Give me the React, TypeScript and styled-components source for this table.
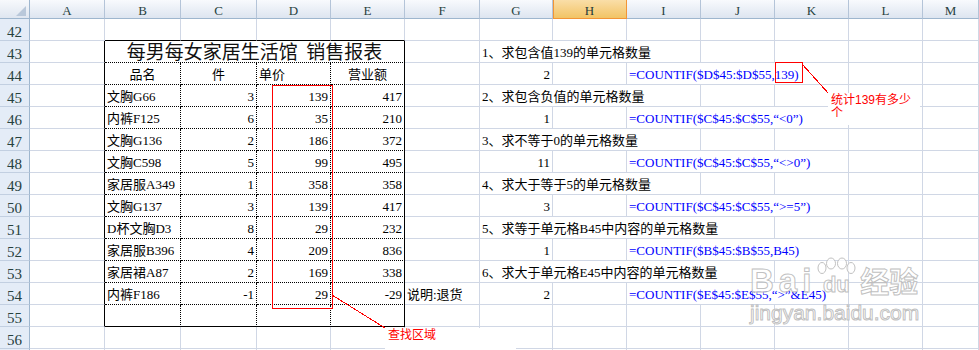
import React from 'react'
import styled, { createGlobalStyle, css } from 'styled-components'

const GlobalStyle = createGlobalStyle`
  html,
  body {
    margin: 0;
    padding: 0;
    background: #fff;
    overflow: hidden;
  }
`

// types
type Line = 'grid' | 'dot' | 'solid'
type Align = 'left' | 'center' | 'right'
type Kind = 'plain' | 'title' | 'formula'

type CellData = {
  text?: string
  span?: number
  align?: Align
  kind?: Kind
  rb?: Line
  bb?: Line
}

const COLUMNS = ['A', 'B', 'C', 'D', 'E', 'F', 'G', 'H', 'I', 'J', 'K', 'L', 'M']
const ACTIVE_COLUMN = 'H'

// helpers to build the rows
const blank = (n: number): CellData[] => Array.from({ length: n }, () => ({}))

// F column + a label overflowing over `span` columns from G
const label = (text: string, span: number): CellData[] => [
  {},
  { text, span },
  ...blank(7 - span)
]

// F, G (result), H, I..K (formula), L, M
const formula = (count: string, text: string): CellData[] => [
  {},
  { text: count, align: 'right' },
  {},
  { text, span: 3, kind: 'formula' },
  {},
  {}
]

const item = (
  name: string,
  qty: string,
  price: string,
  amount: string,
  bb: Line = 'dot'
): CellData[] => [
  { rb: 'solid' },
  { text: name, rb: 'dot', bb },
  { text: qty, align: 'right', rb: 'dot', bb },
  { text: price, align: 'right', rb: 'dot', bb },
  { text: amount, align: 'right', rb: 'solid', bb }
]

const ROWS: { n: number; cells: CellData[] }[] = [
  { n: 42, cells: [{}, ...blank(4).map(() => ({ bb: 'solid' as Line })), ...blank(8)] },
  {
    n: 43,
    cells: [
      { rb: 'solid' },
      {
        text: '每男每女家居生活馆  销售报表',
        span: 4,
        kind: 'title',
        align: 'center',
        rb: 'solid',
        bb: 'dot'
      },
      ...label('1、求包含值139的单元格数量', 3)
    ]
  },
  {
    n: 44,
    cells: [
      { rb: 'solid' },
      { text: '品名', align: 'center', rb: 'dot', bb: 'dot' },
      { text: '件', align: 'center', rb: 'dot', bb: 'dot' },
      { text: '单价', rb: 'dot', bb: 'dot' },
      { text: '营业额', align: 'center', rb: 'solid', bb: 'dot' },
      ...formula('2', '=COUNTIF($D$45:$D$55,139)')
    ]
  },
  { n: 45, cells: [...item('文胸G66', '3', '139', '417'), ...label('2、求包含负值的单元格数量', 3)] },
  { n: 46, cells: [...item('内裤F125', '6', '35', '210'), ...formula('1', '=COUNTIF($C$45:$C$55,“<0”)')] },
  { n: 47, cells: [...item('文胸G136', '2', '186', '372'), ...label('3、求不等于0的单元格数量', 3)] },
  { n: 48, cells: [...item('文胸C598', '5', '99', '495'), ...formula('11', '=COUNTIF($C$45:$C$55,“<>0”)')] },
  { n: 49, cells: [...item('家居服A349', '1', '358', '358'), ...label('4、求大于等于5的单元格数量', 3)] },
  { n: 50, cells: [...item('文胸G137', '3', '139', '417'), ...formula('3', '=COUNTIF($C$45:$C$55,“>=5”)')] },
  { n: 51, cells: [...item('D杯文胸D3', '8', '29', '232'), ...label('5、求等于单元格B45中内容的单元格数量', 4)] },
  { n: 52, cells: [...item('家居服B396', '4', '209', '836'), ...formula('1', '=COUNTIF($B$45:$B$55,B45)')] },
  { n: 53, cells: [...item('家居裙A87', '2', '169', '338'), ...label('6、求大于单元格E45中内容的单元格数量', 4)] },
  {
    n: 54,
    cells: [
      ...item('内裤F186', '-1', '29', '-29'),
      { text: '说明:退货' },
      ...formula('2', '=COUNTIF($E$45:$E$55,“>”&E45)').slice(1)
    ]
  },
  { n: 55, cells: [...item('', '', '', '', 'solid'), ...blank(8)] },
  { n: 56, cells: blank(13) },
  // only a sliver of the next row shows at the bottom edge
  { n: 0, cells: blank(13) }
]

const border = (line: Line = 'grid') => {
  if (line === 'dot') return '1px dotted #000'
  if (line === 'solid') return '1px solid #000'
  return '1px solid #d0d7e5'
}

const justify = (align: Align) =>
  align === 'right' ? 'flex-end' : align === 'center' ? 'center' : 'flex-start'

const App = () => {
  return (
    <Page>
      <GlobalStyle />
      <Sheet>
        <Corner />
        {COLUMNS.map((c) => (
          <ColHead key={c} $active={c === ACTIVE_COLUMN}>
            {c}
          </ColHead>
        ))}
        {ROWS.map(({ n, cells }) => (
          <React.Fragment key={n}>
            <RowHead>{n > 0 ? n : ''}</RowHead>
            {cells.map((cell, i) => (
              <Cell
                key={i}
                $span={cell.span ?? 1}
                $align={cell.align ?? 'left'}
                $kind={cell.kind ?? 'plain'}
                $rb={cell.rb}
                $bb={cell.bb}
              >
                {cell.text}
              </Cell>
            ))}
          </React.Fragment>
        ))}
      </Sheet>

      <Leaders width="979" height="350" viewBox="0 0 979 350">
        <line x1="332" y1="295" x2="385" y2="328" />
        <line x1="802" y1="64" x2="829" y2="94" />
      </Leaders>
      <RedFrame $x={272} $y={85} $w={61} $h={224} />
      <RedFrame $x={775} $y={62} $w={28} $h={21} />

      <Note $x={828} $y={93} $w={92} $h={32}>
        统计139有多少
        <br />个
      </Note>
      <Note $x={385} $y={328} $w={131} $h={22}>
        查找区域
      </Note>

      <Watermark>
        <MarkRow>
          <MarkWord>Bai</MarkWord>
          <Paw>
            <svg width="40" height="17" viewBox="0 0 40 17">
              <ellipse cx="6" cy="11" rx="4" ry="5.5" />
              <ellipse cx="15" cy="6.5" rx="4.5" ry="5.5" />
              <ellipse cx="26" cy="6.5" rx="4.5" ry="5.5" />
              <ellipse cx="35" cy="11" rx="4" ry="5.5" />
            </svg>
            <PawText>du</PawText>
          </Paw>
          <MarkCjk>经验</MarkCjk>
        </MarkRow>
        <MarkUrl>jingyan.baidu.com</MarkUrl>
      </Watermark>
    </Page>
  )
}

export default App

const Page = styled.div`
  position: relative;
  width: 979px;
  height: 350px;
  overflow: hidden;
  background: #fff;
`

const Sheet = styled.div`
  display: grid;
  grid-template-columns: 30px 75px 76px 76px 74px 74px 75px 73px 74px 74px 74px 74px 74px 1fr;
  grid-template-rows: 19px;
  grid-auto-rows: 22px;
`

const Corner = styled.div`
  position: relative;
  background: linear-gradient(#f7f9fc, #dfe6f0);
  border-right: 1px solid #9eb6ce;
  border-bottom: 1px solid #9eb6ce;

  &::after {
    content: '';
    position: absolute;
    right: 3px;
    bottom: 2px;
    border-style: solid;
    border-width: 0 0 10px 10px;
    border-color: transparent transparent #b9c8da transparent;
  }
`

const ColHead = styled.div<{ $active?: boolean }>`
  display: flex;
  justify-content: center;
  align-items: center;
  padding-top: 3px;
  box-sizing: border-box;
  background: linear-gradient(#f8fafd, #dde5f0);
  border-right: 1px solid #b4c4d8;
  border-bottom: 1px solid #9eb6ce;
  font-family: 'Liberation Serif', serif;
  font-size: 13px;
  line-height: 13px;
  color: #27413e;

  ${({ $active }) =>
    $active &&
    css`
      background: linear-gradient(#fadea8, #f2c465);
      border-right-color: #f29536;
      border-bottom-color: #f29536;
      box-shadow: inset 1px 0 #f29536;
      color: #1f3a3a;
    `}
`

const RowHead = styled.div`
  display: flex;
  justify-content: center;
  align-items: flex-end;
  background: #e4ecf7;
  border-right: 1px solid #9eb6ce;
  border-bottom: 1px solid #c2cfe1;
  font-family: 'Liberation Serif', serif;
  font-size: 15px;
  line-height: 15px;
  color: #27413e;
`

const Cell = styled.div<{
  $span: number
  $align: Align
  $kind: Kind
  $rb?: Line
  $bb?: Line
}>`
  grid-column: span ${({ $span }) => $span};
  display: flex;
  align-items: flex-end;
  justify-content: ${({ $align }) => justify($align)};
  min-width: 0;
  padding: 0 2px 1px;
  box-sizing: border-box;
  border-right: ${({ $rb }) => border($rb)};
  border-bottom: ${({ $bb }) => border($bb)};
  white-space: pre;
  font-family: 'Liberation Serif', 'Noto Sans CJK SC', serif;
  font-size: 13px;
  line-height: 17px;
  color: #000;

  ${({ $kind }) =>
    $kind === 'title' &&
    css`
      font-family: 'Noto Sans CJK SC', sans-serif;
      font-size: 19px;
      line-height: 20px;
      color: #111;
    `}

  ${({ $kind }) =>
    $kind === 'formula' &&
    css`
      color: #0000ff;
    `}
`

const Leaders = styled.svg`
  position: absolute;
  top: 0;
  left: 0;
  pointer-events: none;
  shape-rendering: crispEdges;

  line {
    stroke: #ff0000;
    stroke-width: 1;
  }
`

const RedFrame = styled.div<{ $x: number; $y: number; $w: number; $h: number }>`
  position: absolute;
  left: ${({ $x }) => $x}px;
  top: ${({ $y }) => $y}px;
  width: ${({ $w }) => $w}px;
  height: ${({ $h }) => $h}px;
  box-sizing: border-box;
  border: 1px solid #ff0000;
`

const Note = styled.div<{ $x: number; $y: number; $w: number; $h: number }>`
  position: absolute;
  left: ${({ $x }) => $x}px;
  top: ${({ $y }) => $y}px;
  width: ${({ $w }) => $w}px;
  height: ${({ $h }) => $h}px;
  box-sizing: border-box;
  padding: 1px 3px 0;
  background: #fff;
  font-family: 'Liberation Sans', 'Noto Sans CJK SC', sans-serif;
  font-size: 12px;
  line-height: 13px;
  color: #ff0000;
`

const Watermark = styled.div`
  position: absolute;
  left: 750px;
  top: 257px;
  display: flex;
  flex-direction: column;
  gap: 6px;
  pointer-events: none;
  color: rgba(255, 255, 255, 0.75);
  -webkit-text-stroke: 1px rgba(185, 185, 185, 0.9);
`

const MarkRow = styled.div`
  display: flex;
  align-items: flex-end;
`

const MarkWord = styled.span`
  font-family: 'Liberation Sans', sans-serif;
  font-weight: bold;
  font-size: 33px;
  line-height: 30px;
  letter-spacing: 5px;
`

const Paw = styled.span`
  display: flex;
  flex-direction: column;
  align-items: center;
  width: 40px;

  svg ellipse {
    fill: rgba(255, 255, 255, 0.75);
    stroke: rgba(185, 185, 185, 0.9);
    stroke-width: 1;
  }
`

const PawText = styled.span`
  font-family: 'Liberation Sans', sans-serif;
  font-weight: bold;
  font-size: 22px;
  line-height: 22px;
`

const MarkCjk = styled.span`
  margin-left: 4px;
  font-family: 'Noto Sans CJK SC', sans-serif;
  font-weight: bold;
  font-size: 29px;
  line-height: 32px;
`

const MarkUrl = styled.span`
  font-family: 'Liberation Sans', sans-serif;
  font-size: 21px;
  line-height: 21px;
`
